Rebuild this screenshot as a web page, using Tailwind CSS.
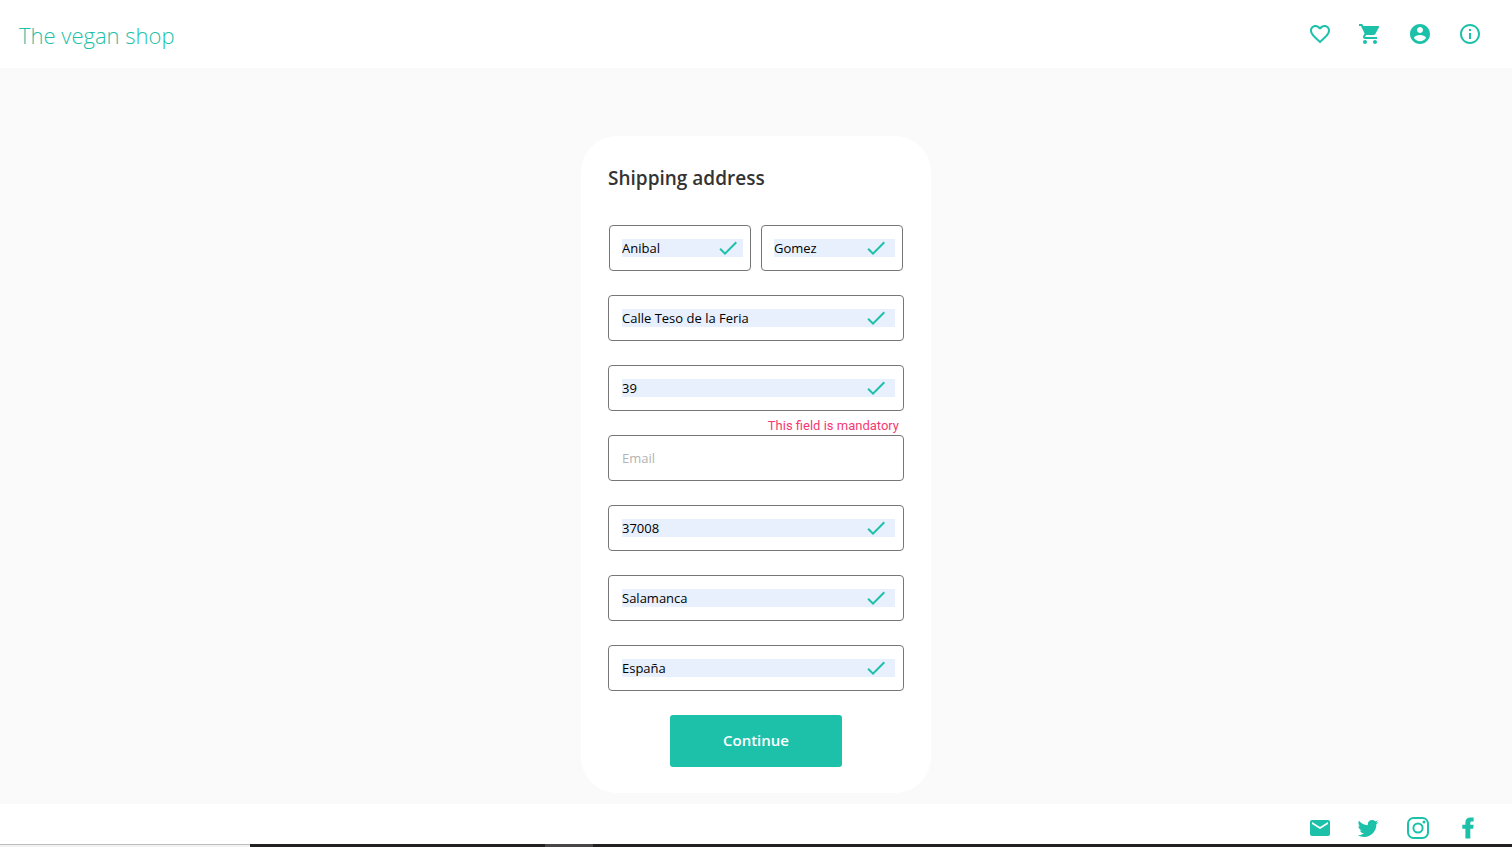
<!DOCTYPE html>
<html lang="en">
<head>
<meta charset="utf-8">
<meta name="viewport" content="width=device-width, initial-scale=1">
<title>The vegan shop</title>
<script src="https://cdn.jsdelivr.net/npm/@tailwindcss/browser@4"></script>
</head>
<body class="flex min-h-screen flex-col bg-[#fafafa] font-['Open_Sans',sans-serif] text-[#1dc1a9]">

<svg class="hidden" aria-hidden="true">
  <symbol id="check" viewBox="0 0 24 24"><path fill="currentColor" d="M9 16.17L4.83 12l-1.42 1.41L9 19 21 7l-1.41-1.41z"/></symbol>
</svg>

<header class="flex h-17 items-center justify-between bg-white pr-[30px] pl-[19px]">
  <a href="#" class="mt-0.5 text-[22px] leading-8 font-light">The vegan shop</a>
  <nav class="flex gap-[26px]" aria-label="Account">
    <a href="#" aria-label="Favourites"><svg class="size-6" viewBox="0 0 24 24" fill="currentColor"><path d="M16.5 3c-1.74 0-3.41.81-4.5 2.09C10.91 3.81 9.24 3 7.5 3 4.42 3 2 5.42 2 8.5c0 3.78 3.4 6.86 8.55 11.54L12 21.35l1.45-1.32C18.6 15.36 22 12.28 22 8.5 22 5.42 19.58 3 16.5 3zm-4.4 15.55l-.1.1-.1-.1C7.14 14.24 4 11.39 4 8.5 4 6.5 5.5 5 7.5 5c1.54 0 3.04.99 3.57 2.36h1.87C13.46 5.99 14.96 5 16.5 5c2 0 3.5 1.5 3.5 3.5 0 2.89-3.14 5.74-7.9 10.05z"/></svg></a>
    <a href="#" aria-label="Cart"><svg class="size-6" viewBox="0 0 24 24" fill="currentColor"><path d="M7 18c-1.1 0-1.99.9-1.99 2S5.9 22 7 22s2-.9 2-2-.9-2-2-2zM1 2v2h2l3.6 7.59-1.35 2.45c-.16.28-.25.61-.25.96 0 1.1.9 2 2 2h12v-2H7.42c-.14 0-.25-.11-.25-.25l.03-.12.9-1.63h7.45c.75 0 1.41-.41 1.75-1.03l3.58-6.49A1 1 0 0 0 20 4H5.21l-.94-2H1zm16 16c-1.1 0-1.99.9-1.99 2s.89 2 1.99 2 2-.9 2-2-.9-2-2-2z"/></svg></a>
    <a href="#" aria-label="Profile"><svg class="size-6" viewBox="0 0 24 24" fill="currentColor"><path d="M12 2C6.48 2 2 6.48 2 12s4.48 10 10 10 10-4.48 10-10S17.52 2 12 2zm0 3c1.66 0 3 1.34 3 3s-1.34 3-3 3-3-1.34-3-3 1.34-3 3-3zm0 14.2c-2.5 0-4.71-1.28-6-3.22.03-1.99 4-3.08 6-3.08 1.99 0 5.97 1.09 6 3.08-1.29 1.94-3.5 3.22-6 3.22z"/></svg></a>
    <a href="#" aria-label="Information"><svg class="size-6" viewBox="0 0 24 24" fill="currentColor"><path d="M11 7h2v2h-2zm0 4h2v6h-2zm1-9C6.48 2 2 6.48 2 12s4.48 10 10 10 10-4.48 10-10S17.52 2 12 2zm0 18c-4.41 0-8-3.59-8-8s3.59-8 8-8 8 3.59 8 8-3.59 8-8 8z"/></svg></a>
  </nav>
</header>

<main class="flex flex-1 justify-center px-4 pt-17 pb-[11px]">
  <form class="flex w-full max-w-[350px] flex-col rounded-[36px] bg-white px-[27px] pt-[26px] pb-[26px]">
    <h1 class="text-[19px] leading-8 font-semibold text-[#333]">Shipping address</h1>

    <div class="mt-[31px] flex flex-col gap-6">
      <div class="flex gap-[10px] px-px">
        <label class="relative flex h-[46px] min-w-0 flex-1 items-center rounded border border-[#767676] pr-[7px] pl-3">
          <input type="text" aria-label="First name" value="Anibal" class="h-[18px] w-full min-w-0 bg-[#e8f0fe] pt-0.5 text-[13px] text-black outline-none">
          <svg class="absolute right-[10px] size-6" aria-hidden="true"><use href="#check"/></svg>
        </label>
        <label class="relative flex h-[46px] min-w-0 flex-1 items-center rounded border border-[#767676] pr-[7px] pl-3">
          <input type="text" aria-label="Last name" value="Gomez" class="h-[18px] w-full min-w-0 bg-[#e8f0fe] pt-0.5 text-[13px] text-black outline-none">
          <svg class="absolute right-[14px] size-6" aria-hidden="true"><use href="#check"/></svg>
        </label>
      </div>
      <label class="relative flex h-[46px] items-center rounded border border-[#767676] pr-2 pl-[13px]">
        <input type="text" aria-label="Street" value="Calle Teso de la Feria" class="h-[18px] w-full min-w-0 bg-[#e8f0fe] pt-0.5 text-[13px] text-black outline-none">
        <svg class="absolute right-[15px] size-6" aria-hidden="true"><use href="#check"/></svg>
      </label>
      <label class="relative flex h-[46px] items-center rounded border border-[#767676] pr-2 pl-[13px]">
        <input type="text" aria-label="Street number" value="39" class="h-[18px] w-full min-w-0 bg-[#e8f0fe] pt-0.5 text-[13px] text-black outline-none">
        <svg class="absolute right-[15px] size-6" aria-hidden="true"><use href="#check"/></svg>
      </label>
      <label class="relative flex h-[46px] items-center rounded border border-[#767676] pr-2 pl-[13px]">
        <input type="email" aria-label="Email" aria-describedby="email-error" placeholder="Email" class="h-[18px] w-full min-w-0 bg-white pt-0.5 text-[13px] text-black outline-none placeholder:text-[#b3b3b3]">
        <span id="email-error" class="absolute right-1 bottom-full font-[Roboto,sans-serif] text-[13px] leading-5 text-[#f63972]">This field is mandatory</span>
      </label>
      <label class="relative flex h-[46px] items-center rounded border border-[#767676] pr-2 pl-[13px]">
        <input type="text" aria-label="Postal code" value="37008" class="h-[18px] w-full min-w-0 bg-[#e8f0fe] pt-0.5 text-[13px] text-black outline-none">
        <svg class="absolute right-[15px] size-6" aria-hidden="true"><use href="#check"/></svg>
      </label>
      <label class="relative flex h-[46px] items-center rounded border border-[#767676] pr-2 pl-[13px]">
        <input type="text" aria-label="City" value="Salamanca" class="h-[18px] w-full min-w-0 bg-[#e8f0fe] pt-0.5 text-[13px] text-black outline-none">
        <svg class="absolute right-[15px] size-6" aria-hidden="true"><use href="#check"/></svg>
      </label>
      <label class="relative flex h-[46px] items-center rounded border border-[#767676] pr-2 pl-[13px]">
        <input type="text" aria-label="Country" value="España" class="h-[18px] w-full min-w-0 bg-[#e8f0fe] pt-0.5 text-[13px] text-black outline-none">
        <svg class="absolute right-[15px] size-6" aria-hidden="true"><use href="#check"/></svg>
      </label>
      <button type="submit" class="h-13 w-[172px] self-center rounded-[3px] bg-[#1dc1a9] pb-0.5 text-[15px] font-semibold text-white">Continue</button>
    </div>
  </form>
</main>

<footer class="bg-white">
  <div class="flex h-10 items-center justify-end gap-[26px] pt-2 pr-8">
    <a href="#" aria-label="Mail"><svg class="size-6" viewBox="0 0 24 24" fill="currentColor"><path d="M20 4H4c-1.1 0-1.99.9-1.99 2L2 18c0 1.1.9 2 2 2h16c1.1 0 2-.9 2-2V6c0-1.1-.9-2-2-2zm0 4l-8 5-8-5V6l8 5 8-5v2z"/></svg></a>
    <a href="#" aria-label="Twitter"><svg class="h-6 w-[22px]" viewBox="2 0 22 24" fill="currentColor"><path d="M22.46 6c-.77.35-1.6.58-2.46.69.88-.53 1.56-1.37 1.88-2.38-.83.5-1.75.85-2.72 1.05C18.37 4.5 17.26 4 16 4c-2.35 0-4.27 1.92-4.27 4.29 0 .34.04.67.11.98C8.28 9.09 5.11 7.38 3 4.79c-.37.63-.58 1.37-.58 2.15 0 1.49.75 2.81 1.91 3.56-.71 0-1.37-.2-1.95-.5v.03c0 2.08 1.48 3.82 3.44 4.21a4.22 4.22 0 0 1-1.93.07 4.28 4.28 0 0 0 4 2.98 8.521 8.521 0 0 1-5.33 1.84c-.34 0-.68-.02-1.02-.06C3.44 20.29 5.7 21 8.12 21 16 21 20.33 14.46 20.33 8.79c0-.19 0-.37-.01-.56.84-.6 1.56-1.36 2.14-2.23z"/></svg></a>
    <a href="#" aria-label="Instagram"><svg class="size-6" viewBox="0 0 24 24" fill="none" stroke="currentColor" stroke-width="2"><rect x="2" y="2" width="20" height="20" rx="5.5"/><circle cx="12" cy="12" r="4.6"/><circle cx="18" cy="6" r="1.5" fill="currentColor" stroke="none"/></svg></a>
    <a href="#" aria-label="Facebook"><svg class="size-6" viewBox="0 0 24 24" fill="currentColor"><path d="M17.6 1.4v4h-2c-1 0-1.3.5-1.3 1.5v1.9h3.3l-.4 3.9h-2.9v9.8H9.4v-9.8H6.3V8.800h3.100V6.300c0-3.300 1.900-4.900 5.200-4.900z"/></svg></a>
  </div>
  <div class="flex h-[3px] bg-[#222021]">
    <div class="w-[250px] border-t border-[#bdbdbd] bg-[#f2f2f2]"></div>
    <div class="ml-[295px] w-12 bg-[#484647]"></div>
  </div>
</footer>
</body>
</html>
